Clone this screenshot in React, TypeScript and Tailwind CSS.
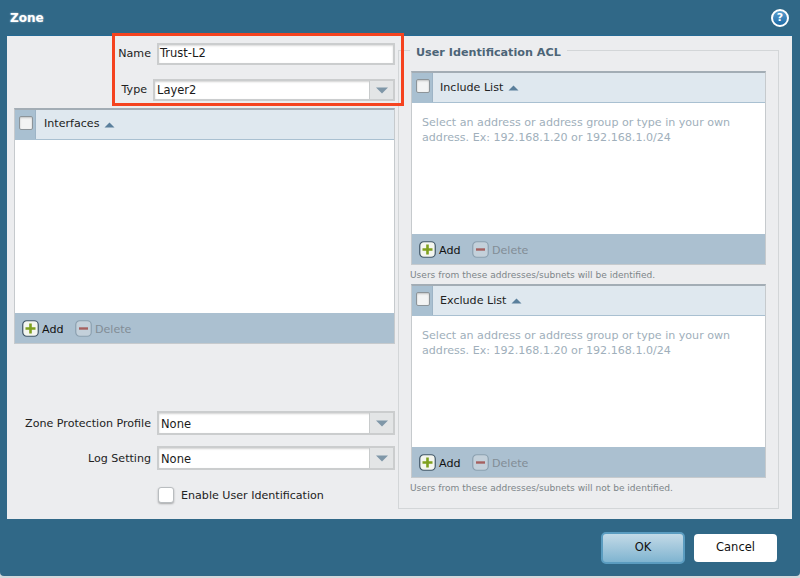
import React from "react";

const font = "font-['DejaVu_Sans',sans-serif]";

function Caret() {
  return (
    <div className="w-[24px] h-full shrink-0 bg-[#e3e5e6] border-l border-[#c8cbcc] flex items-center justify-center">
      <svg width="14" height="7" viewBox="0 0 14 7"><path d="M1 0.5h12L7 6.5z" fill="#7f97a8" /></svg>
    </div>
  );
}

function Select({ value, h, pl = "pl-[2px]", pt = "pt-[1px]" }: { value: string; h: string; pl?: string; pt?: string }) {
  return (
    <div className={`flex-1 flex items-stretch ${h} bg-white border-2 border-[#cbcdce] shadow-[inset_0_1px_2px_rgba(0,0,0,0.18)]`}>
      <div className={`flex-1 flex items-center ${pl} ${pt} text-[11.5px] text-[#1a1a1a]`}>{value}</div>
      <Caret />
    </div>
  );
}

function Checkbox() {
  return (
    <div className="w-[21px] shrink-0 bg-[#a9c0d1] border-r border-[#9db4c6] flex items-center justify-end pr-[2px]">
      <div className="w-[14px] h-[14px] rounded-[2px] bg-[#f3f4f4] border border-[#8c9499] shadow-[inset_0_1px_2px_rgba(0,0,0,0.2)] -mt-[3px]" />
    </div>
  );
}

function SortUp() {
  return <svg width="11" height="6" viewBox="0 0 11 6" className="ml-[5px]"><path d="M5.5 0.5L10.5 5.5H0.5z" fill="#5a7f9c" /></svg>;
}

function IconBtn({ kind }: { kind: "add" | "del" }) {
  const add = kind === "add";
  return (
    <svg width="17" height="17" viewBox="0 0 17 17" className="shrink-0">
      <rect x="0.75" y="0.75" width="15.5" height="15.5" rx="4" fill={add ? "#f4f6ef" : "#c3d0da"} stroke={add ? "#3f5566" : "#8ba0b0"} strokeWidth="1.2" />
      {add ? (
        <path d="M8.5 3.5v10M3.5 8.5h10" stroke="#7fa01e" strokeWidth="2.6" />
      ) : (
        <path d="M4 8.5h9" stroke="#a5605f" strokeWidth="2.4" />
      )}
    </svg>
  );
}

function Footer() {
  return (
    <div className="h-[30px] shrink-0 bg-[#abc0d0] flex items-center pl-[7px] pt-[1px] text-[11.1px]">
      <IconBtn kind="add" />
      <span className="ml-[3px] w-[33px] pt-[3px] text-[#111]">Add</span>
      <IconBtn kind="del" />
      <span className="ml-[3px] pt-[3px] text-[#828d96]">Delete</span>
    </div>
  );
}

function ListTable({ title, h, hint, pad = "pl-[8px]" }: { title: string; h: string; hint?: boolean; pad?: string }) {
  return (
    <div className={`${h} flex flex-col border border-[#c6cacd] border-t-2 border-t-[#a3adb5] bg-white`}>
      <div className="h-[30px] shrink-0 flex items-stretch bg-[#dfe8ef] border-b border-[#a9c0d1]">
        <Checkbox />
        <div className={`flex items-center ${pad} text-[11.1px] text-[#222]`}>
          {title}
          <SortUp />
        </div>
      </div>
      <div className="flex-1 px-[10px] pt-[12px] text-[11.1px] leading-[15px] text-[#a0afbb]">
        {hint && (
          <>
            Select an address or address group or type in your own
            <br />
            address. Ex: 192.168.1.20 or 192.168.1.0/24
          </>
        )}
      </div>
      <Footer />
    </div>
  );
}

export default function App() {
  return (
    <div className={`w-[800px] h-[578px] bg-[#d5d9dc] ${font}`}>
      <div className="relative w-[800px] h-[576px] bg-[#306887] rounded-b-[4px] flex flex-col">
        <div className="h-[35px] shrink-0 flex items-center justify-between pl-[10px] pr-[11px]">
          <span className="text-[12px] font-bold text-white [text-shadow:0_0_2px_rgba(255,255,255,0.6)]">Zone</span>
          <div className="w-[18px] h-[18px] rounded-full bg-linear-to-b from-[#5aa0d0] to-[#1c6aa5] border-2 border-white flex items-center justify-center text-[11px] font-bold leading-none text-white">?</div>
        </div>

        <div className="h-[484px] mx-[7px] mr-[8px] shrink-0 bg-[#ecedef] flex border-t border-[#256a94]">
          <div className="w-[381px] ml-[7px] shrink-0 flex flex-col pt-[7px]">
            <div className="flex items-center h-[22px]">
              <label className="w-[137px] text-right text-[11.1px] text-[#222]">Name</label>
              <div className="ml-[6px] flex-1 h-full bg-white border-2 border-[#cbcdce] shadow-[inset_0_1px_2px_rgba(0,0,0,0.15)] flex items-center pl-[1px] text-[11.5px] text-[#1a1a1a]">Trust-L2</div>
            </div>
            <div className="flex items-center h-[22px] mt-[14px]">
              <label className="w-[133px] text-right text-[11.1px] text-[#222]">Type</label>
              <div className="ml-[6px] flex-1 flex h-full"><Select value="Layer2" h="h-[22px]" /></div>
            </div>
            <div className="mt-[7px]">
              <ListTable title="Interfaces" h="h-[236px]" />
            </div>
            <div className="flex items-center h-[24px] mt-[67px]">
              <label className="w-[137px] text-right pt-[2px] text-[11.1px] text-[#222]">Zone Protection Profile</label>
              <div className="ml-[6px] flex-1 flex h-full"><Select value="None" h="h-[24px]" pt="pt-[3px]" /></div>
            </div>
            <div className="flex items-center h-[24px] mt-[11px]">
              <label className="w-[137px] text-right pt-[2px] text-[11.1px] text-[#222]">Log Setting</label>
              <div className="ml-[6px] flex-1 flex h-full"><Select value="None" h="h-[24px]" pt="pt-[3px]" /></div>
            </div>
            <div className="flex items-center mt-[15px] ml-[144px]">
              <div className="w-[16px] h-[16px] rounded-[3px] bg-white border border-[#b9bdc0] shadow-[0_1px_2px_rgba(0,0,0,0.3)]" />
              <span className="ml-[7px] pt-[3px] text-[11.1px] text-[#222]">Enable User Identification</span>
            </div>
          </div>

          <div className="relative ml-[3px] mt-[14px] w-[381px] h-[459px] border border-[#d3d6d8] px-[12px] pt-[20px]">
            <div className="absolute left-[11px] -top-[6px] bg-[#ecedef] px-[6px] text-[11.2px] font-bold text-[#4c6577]">User Identification ACL</div>
            <ListTable title="Include List" h="h-[194px]" hint pad="pl-[7px] pt-[1px]" />
            <div className="h-[19px] flex items-center pt-[2px] -ml-[1px] text-[9.05px] text-[#7d8589]">Users from these addresses/subnets will be identified.</div>
            <ListTable title="Exclude List" h="h-[194px]" hint pad="pl-[7px] pt-[1px]" />
            <div className="h-[22px] flex items-center -ml-[1px] text-[9.05px] text-[#7d8589]">Users from these addresses/subnets will not be identified.</div>
          </div>
        </div>

        <div className="flex-1 flex items-center justify-end gap-[9px] pr-[23px]">
          <button className="w-[84px] h-[32px] rounded-[5px] bg-linear-to-b from-[#c3dae7] to-[#7fb4d0] border-2 border-[#5a9cc0] text-[11.5px] text-[#111]">OK</button>
          <button className="w-[83px] h-[28px] rounded-[4px] bg-white text-[11.5px] text-[#111]">Cancel</button>
        </div>

        <div className="absolute left-[112px] top-[33px] w-[292px] h-[73px] border-[3px] border-[#f5431f] pointer-events-none" />
      </div>
    </div>
  );
}
